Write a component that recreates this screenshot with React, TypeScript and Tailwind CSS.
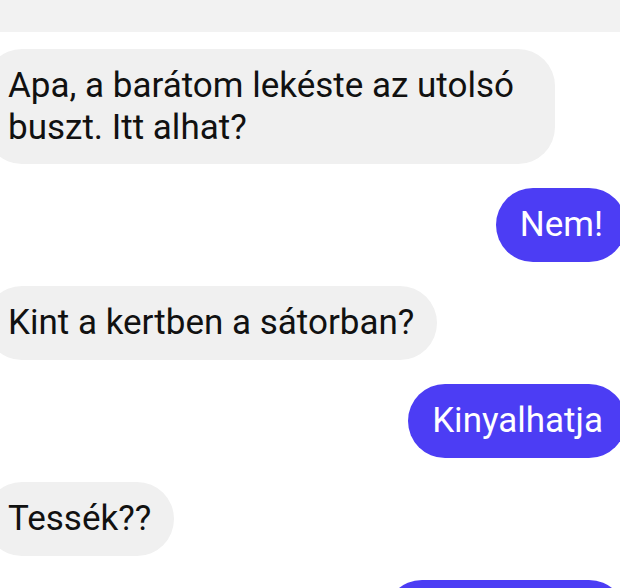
import React from "react";

const Left = ({ children, className = "" }: { children: React.ReactNode; className?: string }) => (
  <div className="flex justify-start">
    <div className={`-ml-[15px] rounded-[37px] bg-[#f0f0f0] pl-[23px] pr-[23px] text-[#111111] ${className}`}>
      {children}
    </div>
  </div>
);

const Right = ({ children }: { children: React.ReactNode }) => (
  <div className="flex justify-end">
    <div className="-mr-[6px] rounded-[37px] bg-[#4c3df4] py-[16px] pl-[24px] pr-[23px] text-white">
      {children}
    </div>
  </div>
);

export default function App() {
  return (
    <div
      className="h-[588px] w-[620px] overflow-hidden bg-white text-[35px] leading-[42px]"
      style={{ fontFamily: "Roboto, 'Noto Sans', sans-serif" }}
    >
      <div className="h-[32px] bg-[#f2f2f2]" />
      <div className="flex flex-col gap-[24px] pt-[17px]">
        <Left className="w-[570px] pr-[30px] py-[15.5px]">
          Apa, a barátom lekéste az utolsó
          <br />
          buszt. Itt alhat?
        </Left>
        <Right>Nem!</Right>
        <Left className="py-[16px]">Kint a kertben a sátorban?</Left>
        <Right>Kinyalhatja</Right>
        <Left className="py-[16px]">Tessék??</Left>
        <div className="flex justify-end">
          <div className="-mr-[6px] h-[74px] w-[241px] rounded-[37px] bg-[#4c3df4]" />
        </div>
      </div>
    </div>
  );
}
